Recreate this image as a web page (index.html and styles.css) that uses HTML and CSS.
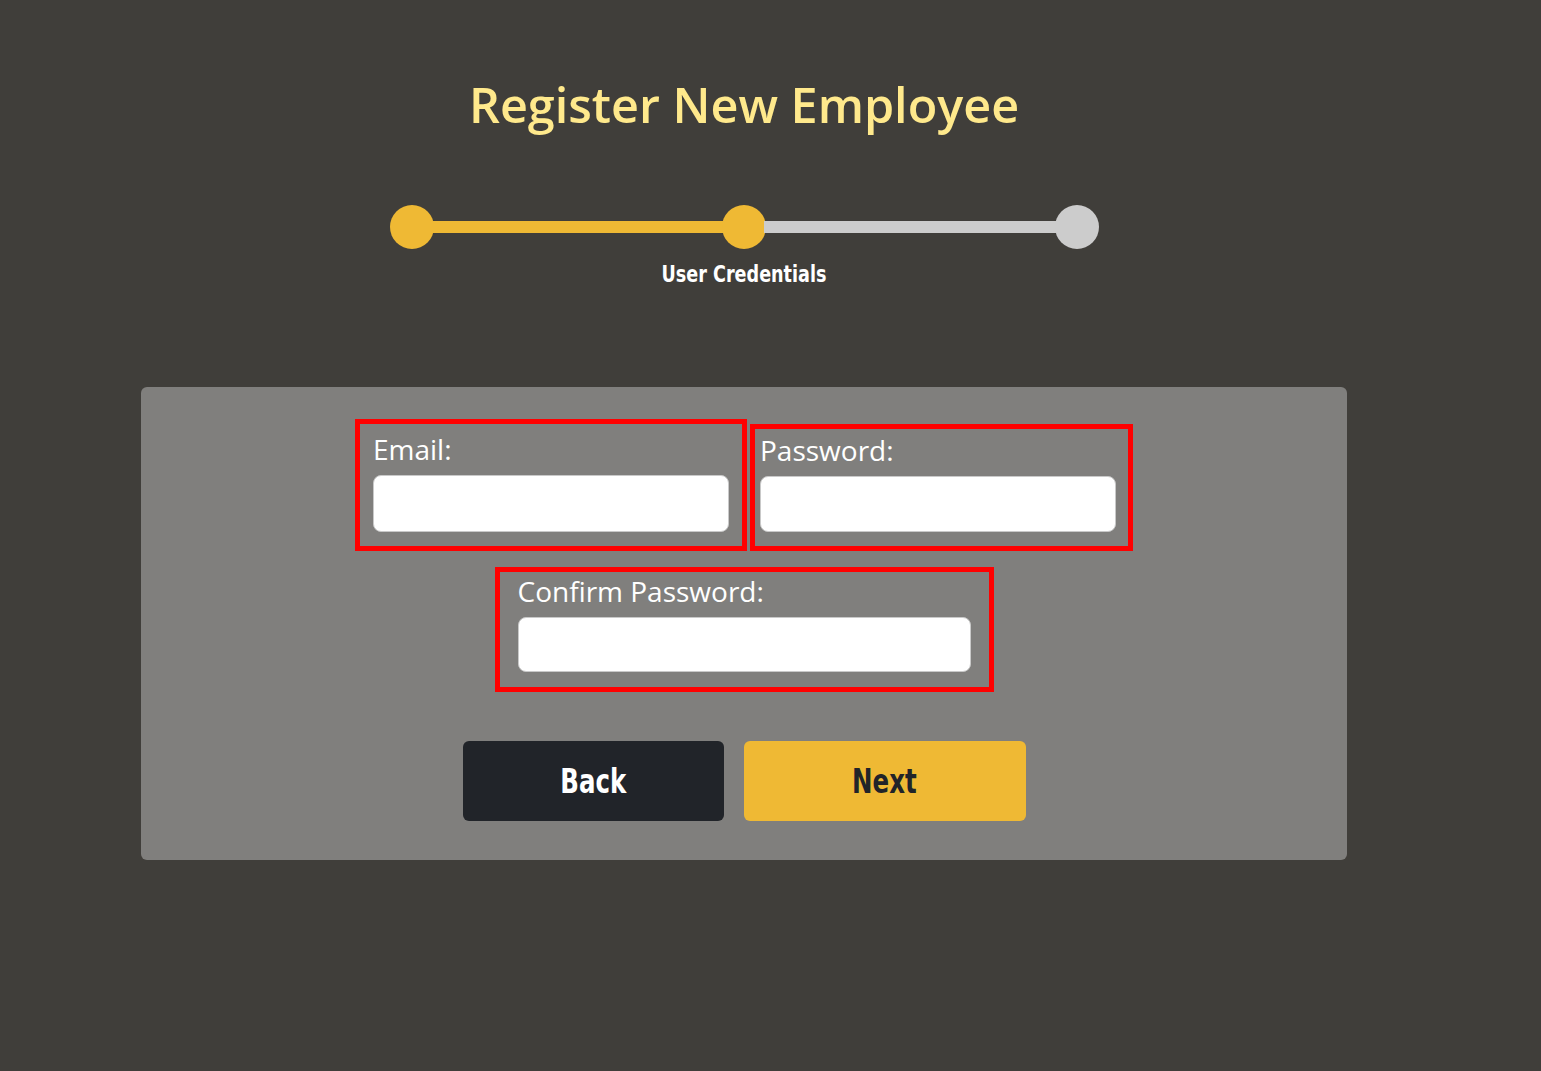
FILE: index.html
```html
<!DOCTYPE html>
<html lang="en">
<head>
    <meta charset="UTF-8">
    <meta name="viewport" content="width=device-width, initial-scale=1.0">
    <title>Register New Employee</title>
    <link rel="stylesheet" href="styles.css">
</head>
<body>
    <div class="page">
        <h1 class="title">Register New Employee</h1>

        <div class="stepper">
            <span class="dot done"></span>
            <span class="bar done"></span>
            <span class="dot done"></span>
            <span class="bar"></span>
            <span class="dot"></span>
        </div>
        <div class="step-label"><span>User Credentials</span></div>

        <form class="card">
            <div class="row">
                <div class="field field-email">
                    <label for="email">Email:</label>
                    <input type="email" id="email">
                </div>
                <div class="field field-password">
                    <label for="password">Password:</label>
                    <input type="password" id="password">
                </div>
            </div>
            <div class="row">
                <div class="field field-confirm">
                    <label for="confirm">Confirm Password:</label>
                    <input type="password" id="confirm">
                </div>
            </div>
            <div class="actions">
                <button type="button" class="btn back"><span>Back</span></button>
                <button type="button" class="btn next"><span>Next</span></button>
            </div>
        </form>
    </div>
</body>
</html>
```

FILE: styles.css
```css
body {
    margin: 0;
    background: #403e3a;
    font-family: 'Open Sans', 'Noto Sans', sans-serif;
    min-height: 100vh;
}

.page {
    width: 1206px;
    margin-left: 141px;
    padding-top: 74px;
}

.title {
    margin: 0;
    text-align: center;
    font-size: 48.5px;
    line-height: 60px;
    font-weight: 600;
    color: #ffe98c;
}

.stepper {
    display: flex;
    align-items: center;
    width: 709px;
    margin: 71px auto 0;
}

.dot {
    width: 44px;
    height: 44px;
    border-radius: 50%;
    background: #cccccc;
    flex-shrink: 0;
}

.bar {
    flex: 1;
    height: 12px;
    margin: 0 -2px;
    background: #cccccc;
}

.dot.done,
.bar.done {
    background: #efb934;
}

.step-label {
    margin-top: 14px;
    text-align: center;
    font-family: 'DejaVu Sans Condensed', 'DejaVu Sans', sans-serif;
    font-stretch: condensed;
    font-weight: 700;
    font-size: 23px;
    line-height: 23px;
    color: #ffffff;
}

.step-label span {
    display: inline-block;
    transform: scaleX(0.85);
}

.card {
    margin-top: 101px;
    background: #807f7d;
    border-radius: 6px;
    padding: 32px 0 39px;
    display: flex;
    flex-direction: column;
    align-items: center;
}

.row {
    display: flex;
    align-items: flex-end;
    gap: 3px;
}

.row + .row {
    margin-top: 16px;
}

.field {
    box-sizing: border-box;
    border: 5px solid #ff0000;
    padding: 4px 12px 14px 5px;
}

.field label {
    display: block;
    font-size: 28px;
    line-height: 34px;
    color: #ffffff;
    margin-bottom: 9px;
}

.field input {
    display: block;
    box-sizing: border-box;
    width: 356px;
    height: 56px;
    margin: 0;
    border: 1px solid #c9c9c9;
    border-radius: 8px;
    background: #ffffff;
    font-size: 20px;
    padding: 0 12px;
}

.field-email {
    width: 392px;
    padding: 8px 13px 14px 13px;
}

.field-email input {
    height: 57px;
}

.field-password {
    width: 383px;
}

.field-confirm {
    width: 499px;
    padding: 2px 18px 15px 18px;
}

.field-confirm input {
    width: 453px;
    height: 55px;
}

.actions {
    display: flex;
    gap: 20px;
    margin-top: 49px;
}

.btn {
    height: 80px;
    border: none;
    border-radius: 6px;
    font-family: 'DejaVu Sans Condensed', 'DejaVu Sans', sans-serif;
    font-stretch: condensed;
    font-weight: 700;
    font-size: 34px;
    cursor: pointer;
}

.btn span {
    display: inline-block;
    transform: scaleX(0.8);
}

.back {
    width: 261px;
    background: #212429;
    color: #ffffff;
}

.next {
    width: 282px;
    background: #efb934;
    color: #212429;
}
```
